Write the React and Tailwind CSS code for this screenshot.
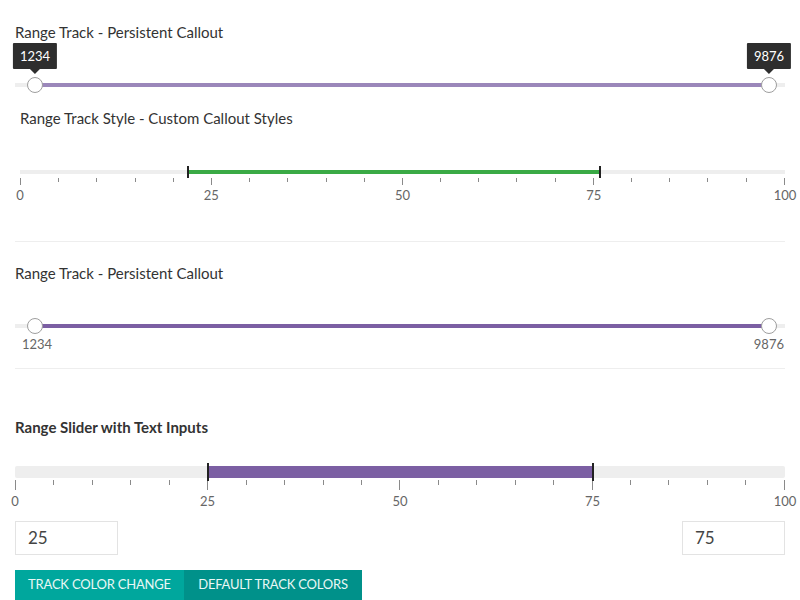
import React from "react";

const font = { fontFamily: "Lato, 'Noto Sans', sans-serif" };

function Handle({ left }) {
  return (
    <div
      className="absolute top-1/2 w-4 h-4 -ml-2 -mt-2 rounded-full bg-white border border-[#9e9e9e]"
      style={{ left }}
    />
  );
}

function Tooltip({ left, text }) {
  return (
    <div className="absolute bottom-[17px] flex flex-col items-center -translate-x-1/2" style={{ left }}>
      <div className="bg-[#2e2e2e] text-white text-[13px] leading-[26px] px-[7px] rounded-[1px]">{text}</div>
      <div className="w-0 h-0 border-l-[5px] border-r-[5px] border-t-[5px] border-l-transparent border-r-transparent border-t-[#2e2e2e]" />
    </div>
  );
}

function Ticks({ majorH, minorH }) {
  const ticks = Array.from({ length: 21 }, (_, i) => i);
  return (
    <div className="flex justify-between">
      {ticks.map((i) => (
        <div key={i} className="w-px bg-[#8a8a8a]" style={{ height: i % 5 === 0 ? majorH : minorH }} />
      ))}
    </div>
  );
}

function Labels() {
  return (
    <div className="flex justify-between text-[13px] leading-[16px] text-[#666]">
      {["0", "25", "50", "75", "100"].map((l) => (
        <div key={l} className="w-0 flex justify-center">
          <span className="whitespace-nowrap">{l}</span>
        </div>
      ))}
    </div>
  );
}

export default function App() {
  return (
    <div className="w-[800px] h-[600px] bg-white overflow-hidden text-[#333]" style={font}>
      {/* Section 1 */}
      <div className="px-[15px]">
        <div className="pt-[22px] text-[15px] leading-[20px]">Range Track - Persistent Callout</div>
        <div className="relative mt-[37px] h-3">
          <div className="absolute left-0 right-0 top-1/2 -mt-[2px] h-1 bg-[#eeeeee]" />
          <div className="absolute top-1/2 -mt-[2px] h-1 bg-[#9b87ba]" style={{ left: 20, right: 16 }} />
          <Handle left={20} />
          <Handle left={754} />
          <Tooltip left={20} text="1234" />
          <Tooltip left={754} text="9876" />
        </div>
      </div>

      {/* Section 2 */}
      <div className="pl-[20px] pr-[15px]">
        <div className="mt-[17px] text-[15px] leading-[20px]">Range Track Style - Custom Callout Styles</div>
        <div className="relative mt-[42px] h-1">
          <div className="absolute inset-0 bg-[#eeeeee]" />
          <div className="absolute top-0 h-1 bg-[#3aaa45]" style={{ left: 168, right: 185 }} />
          <div className="absolute -top-[4px] w-[2px] h-3 bg-[#222]" style={{ left: 167 }} />
          <div className="absolute -top-[4px] w-[2px] h-3 bg-[#222]" style={{ left: 579 }} />
        </div>
        <div className="mt-[4px]">
          <Ticks majorH={7} minorH={4} />
        </div>
        <div className="mt-[2px]">
          <Labels />
        </div>
      </div>

      <div className="mx-[15px] mt-[38px] h-px bg-[#eeeeee]" />

      {/* Section 3 */}
      <div className="px-[15px]">
        <div className="mt-[21px] text-[15px] leading-[20px]">Range Track - Persistent Callout</div>
        <div className="relative mt-[37px] h-3">
          <div className="absolute left-0 right-0 top-1/2 -mt-[2px] h-1 bg-[#eeeeee]" />
          <div className="absolute top-1/2 -mt-[2px] h-1 bg-[#7b5fa3]" style={{ left: 20, right: 16 }} />
          <Handle left={20} />
          <Handle left={754} />
        </div>
        <div className="mt-[4px] flex justify-between pl-[7px] pr-[1px] text-[13px] leading-[16px] text-[#666]">
          <span>1234</span>
          <span>9876</span>
        </div>
      </div>

      <div className="mx-[15px] mt-[16px] h-px bg-[#eeeeee]" />

      {/* Section 4 */}
      <div className="px-[15px]">
        <div className="mt-[48px] text-[15px] leading-[20px] font-bold">Range Slider with Text Inputs</div>
        <div className="relative mt-[29px] h-3">
          <div className="absolute inset-0 bg-[#eeeeee] rounded-[2px]" />
          <div className="absolute top-0 h-3 bg-[#7b5fa3]" style={{ left: 193, right: 192 }} />
          <div className="absolute -top-[3px] w-[2px] h-[18px] bg-[#222]" style={{ left: 192 }} />
          <div className="absolute -top-[3px] w-[2px] h-[18px] bg-[#222]" style={{ left: 577 }} />
        </div>
        <div className="mt-[2px]">
          <Ticks majorH={10} minorH={5} />
        </div>
        <div className="mt-[3px]">
          <Labels />
        </div>
        <div className="mt-[12px] flex justify-between">
          <div className="w-[103px] h-[34px] border border-[#e3e3e3] pl-[12px] flex items-center text-[17px] text-[#444]">25</div>
          <div className="w-[103px] h-[34px] border border-[#e3e3e3] pl-[12px] flex items-center text-[17px] text-[#444]">75</div>
        </div>
        <div className="mt-[15px] flex">
          <button className="h-[30px] w-[169px] px-0 bg-[#00a79d] text-[#e9f7f5] text-[13px] tracking-[-0.2px] uppercase whitespace-nowrap text-center">Track Color Change</button>
          <button className="h-[30px] w-[178px] px-0 bg-[#00918a] text-[#e9f7f5] text-[13px] tracking-[-0.2px] uppercase whitespace-nowrap text-center">Default Track Colors</button>
        </div>
      </div>
    </div>
  );
}
